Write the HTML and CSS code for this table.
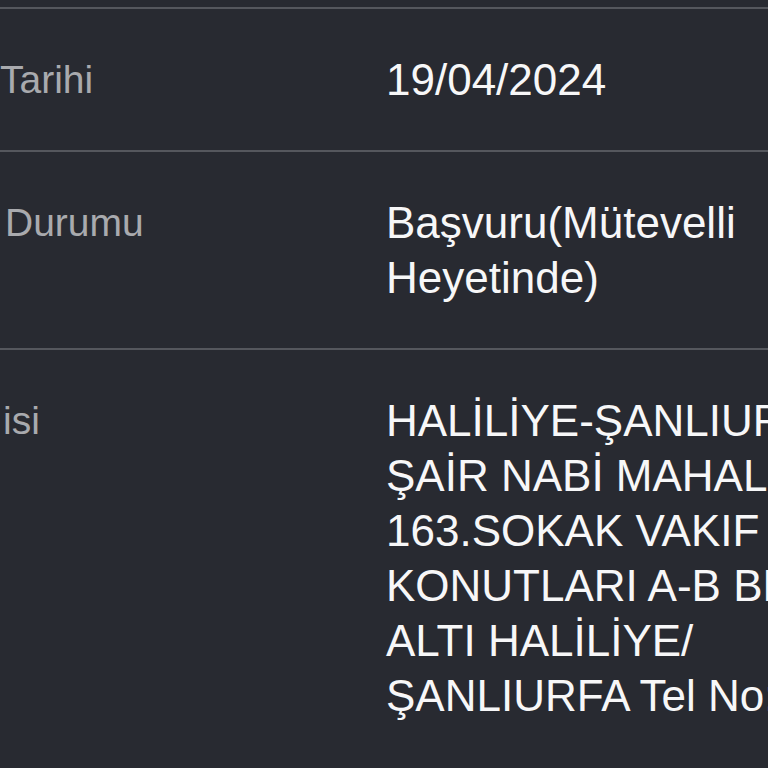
FILE: index.html
```html
<!DOCTYPE html>
<html lang="tr">
<head>
<meta charset="utf-8">
<title>Başvuru Bilgileri</title>
<link rel="stylesheet" href="styles.css">
</head>
<body>
<div class="table">
  <div class="row">
    <div class="label label-a">Tarihi</div>
    <div class="value">19/04/2024</div>
  </div>
  <div class="row">
    <div class="label label-b">Durumu</div>
    <div class="value">Başvuru(Mütevelli Heyetinde)</div>
  </div>
  <div class="row row-last">
    <div class="label label-c">isi</div>
    <div class="value">HALİLİYE-ŞANLIURFA ŞAİR NABİ MAHALLESİ 163.SOKAK VAKIF KONUTLARI A-B BLOK ALTI HALİLİYE/ŞANLIURFA Tel No:</div>
  </div>
</div>
</body>
</html>
```
FILE: styles.css
```css
html, body {
  margin: 0;
  padding: 0;
  background: #282a31;
  overflow: hidden;
  height: 100%;
}

body {
  font-family: "Liberation Sans", Arial, Helvetica, sans-serif;
  -webkit-font-smoothing: antialiased;
}

.table {
  padding-top: 7px;
  width: 900px;
}

.row {
  display: grid;
  grid-template-columns: 386px 500px;
  border-top: 2px solid #55575d;
  padding: 43px 0;
}

.row-last {
  padding-bottom: 200px;
}

.label {
  font-size: 39px;
  line-height: 55px;
  color: #a9aaae;
}

.label-a { padding-left: 0; }
.label-b { padding-left: 5px; }
.label-c { padding-left: 3px; }

.value {
  font-size: 44px;
  line-height: 55px;
  color: #f7f7f8;
}
```
